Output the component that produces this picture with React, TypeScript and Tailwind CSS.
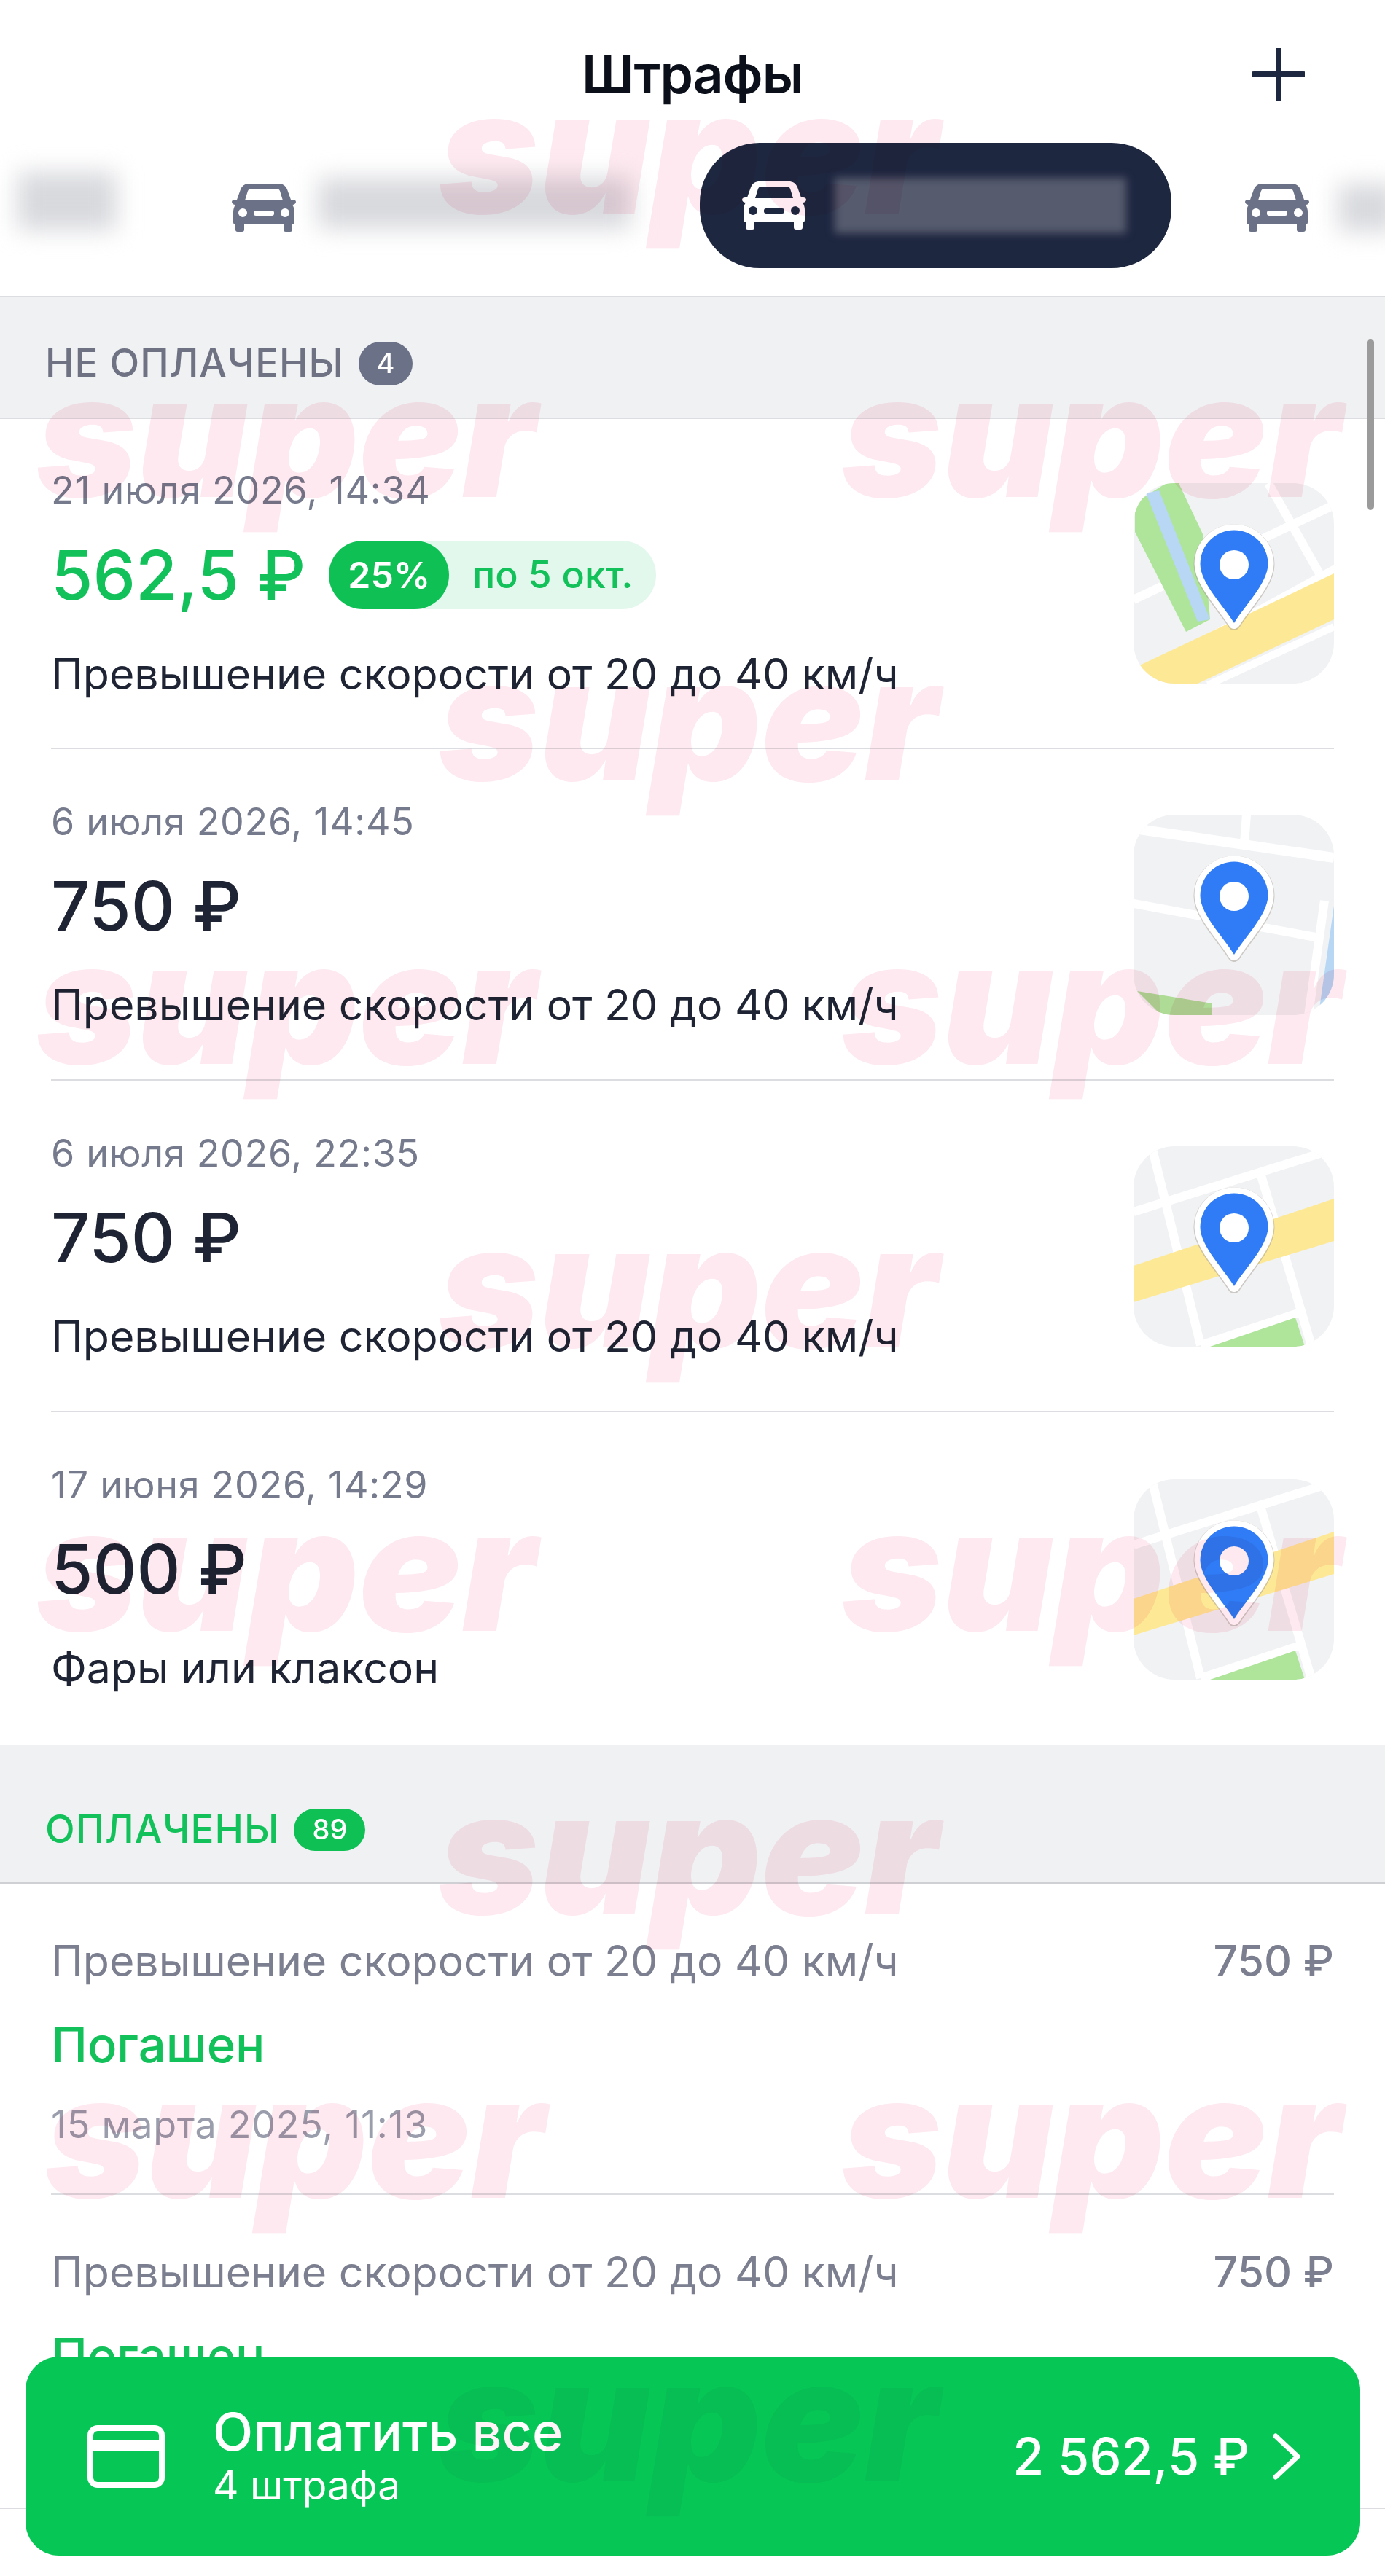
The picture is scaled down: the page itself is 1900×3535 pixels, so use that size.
const watermarks = [
  "left-[602px] top-[90px]",
  "left-[50px] top-[479px]",
  "left-[1155px] top-[479px]",
  "left-[602px] top-[868px]",
  "left-[50px] top-[1257px]",
  "left-[1155px] top-[1257px]",
  "left-[602px] top-[1646px]",
  "left-[50px] top-[2035px]",
  "left-[1155px] top-[2035px]",
  "left-[602px] top-[2424px]",
  "left-[62px] top-[2813px]",
  "left-[1155px] top-[2813px]",
  "left-[602px] top-[3202px] opacity-50",
];

function Car({ body, detail }: { body: string; detail: string }) {
  return (
    <svg width="88" height="66" viewBox="0 0 88 66">
      <path
        fill={body}
        d="M24 0h40c6 0 10 3 12 8l5 14h3c2 0 4 1 4 3s-2 4-5 4c2 3 3 6 3 10v14c0 2-1 3-3 3v7c0 2-1 3-3 3h-6c-2 0-3-1-3-3v-7H17v7c0 2-1 3-3 3H8c-2 0-3-1-3-3v-7c-2 0-3-1-3-3V39c0-4 1-7 3-10-3 0-5-2-5-4s2-3 4-3h3l5-14c2-5 6-8 12-8z"
      />
      <path fill={detail} d="M22 10c1-2 2-3 4-3h36c2 0 3 1 4 3l4 13H18z" />
      <circle cx="15" cy="40" r="6" fill={detail} />
      <circle cx="73" cy="40" r="6" fill={detail} />
      <rect x="30" y="37" width="28" height="7" rx="3" fill={detail} />
    </svg>
  );
}

function Blur({ className }: { className: string }) {
  return <div className={`bg-[#d8d9dd] blur-[16px] ${className}`} />;
}

const PIN =
  "M138 192C125 170 91.5 137 91.5 111A46.5 46.5 0 1 1 184.5 111C184.5 137 151 170 138 192Z";

function MapThumb({ variant, id }: { variant: 1 | 2 | 3; id: string }) {
  return (
    <svg width="275" height="275" viewBox="0 0 275 275" className="shrink-0">
      <clipPath id={id}>
        <rect width="275" height="275" rx="56" />
      </clipPath>
      <g clipPath={`url(#${id})`}>
        <rect width="275" height="275" fill="#f1f2f4" />
        {variant === 1 && (
          <>
            <path d="M0 160 275 30" stroke="#fff" strokeWidth="12" />
            <path d="M185 0 255 124" stroke="#fff" strokeWidth="12" />
            <path fill="#aee59a" d="M2 27 45 0h17l33 70 10 117-33 17L2 67z" />
            <path fill="#b7d7f5" d="M17 14 35 10l70 177-17 3z" />
            <path fill="#fff" d="M0 262 275 112v14L0 276z" />
            <path fill="#fde995" d="M0 254 275 124v63L88 275H10z" />
            <path d="M102 277 275 197" stroke="#fff" strokeWidth="10" />
          </>
        )}
        {variant === 2 && (
          <>
            <path d="M0 19 275 59" stroke="#fff" strokeWidth="14" />
            <path d="M155 0 152 39" stroke="#fff" strokeWidth="12" />
            <path d="M0 122 255 169" stroke="#fff" strokeWidth="12" />
            <path d="M262 118 240 275" stroke="#fff" strokeWidth="12" />
            <path fill="#b7d7f5" d="M275 125 255 266 252 275H275z" />
            <path fill="#aedc96" d="M5 242 108 259v16H38z" />
          </>
        )}
        {variant === 3 && (
          <>
            <path d="M25 0 92 273" stroke="#fff" strokeWidth="12" />
            <path d="M0 90 275 4" stroke="#fff" strokeWidth="12" />
            <path d="M175 40 245 277" stroke="#fff" strokeWidth="12" />
            <path d="M92 273 232 227" stroke="#fff" strokeWidth="12" />
            <path fill="#fde995" d="M0 164 275 72v58L0 214z" />
            <path fill="#aee59a" d="M105 275 222 235 235 275z" />
          </>
        )}
      </g>
      <path d={PIN} fill="#a89f94" stroke="#a89f94" strokeWidth="18" strokeLinejoin="round" opacity="0.5" transform="translate(0 1)" />
      <path d={PIN} fill="#fff" stroke="#fff" strokeWidth="16" strokeLinejoin="round" />
      <path d={PIN} fill="#2f7cf6" />
      <circle cx="138" cy="112" r="20" fill="#fff" />
    </svg>
  );
}

const unpaid = [
  { date: "6 июля 2026, 14:45", amount: "750 ₽", title: "Превышение скорости от 20 до 40 км/ч", map: 2 as const },
  { date: "6 июля 2026, 22:35", amount: "750 ₽", title: "Превышение скорости от 20 до 40 км/ч", map: 3 as const },
];

export default function App() {
  return (
    <div className="relative w-[1900px] h-[3535px] overflow-hidden bg-white [font-family:Inter,sans-serif] text-[#1e2433]">
      {/* Title */}
      <div className="relative flex h-[196px] items-start justify-center pt-[62px]">
        <h1 className="text-[73px] leading-[80px] font-semibold text-[#0b0f1a] tracking-[-1px]">Штрафы</h1>
        <svg className="absolute right-[110px] top-[66px]" width="72" height="72" viewBox="0 0 72 72">
          <path d="M36 2v68M2 36h68" stroke="#1e2740" strokeWidth="8" strokeLinecap="round" />
        </svg>
      </div>

      {/* Car tabs */}
      <div className="flex h-[210px] items-start overflow-hidden">
        <Blur className="ml-[24px] mt-[40px] h-[80px] w-[136px] shrink-0" />
        <div className="ml-[158px] mt-[56px] shrink-0">
          <Car body="#6b7186" detail="#ffffff" />
        </div>
        <Blur className="ml-[30px] mt-[48px] h-[70px] w-[430px] shrink-0" />
        <div className="ml-[94px] flex h-[172px] w-[647px] shrink-0 items-center rounded-[82px] bg-[#1e2740] pl-[58px]">
          <Car body="#ffffff" detail="#1e2740" />
          <div className="ml-[39px] h-[76px] w-[400px] bg-[#565b6e] blur-[6px]" />
        </div>
        <div className="ml-[101px] mt-[56px] shrink-0">
          <Car body="#6b7186" detail="#ffffff" />
        </div>
        <Blur className="ml-[40px] mt-[56px] h-[66px] w-[80px] shrink-0" />
      </div>

      {/* Unpaid */}
      <div className="flex h-[169px] items-center gap-[20px] border-y-2 border-y-[#dcdde0] bg-[#f0f1f3] pl-[62px] pt-[16px]">
        <span className="text-[53px] font-medium tracking-[1px] text-[#6e7283]">НЕ ОПЛАЧЕНЫ</span>
        <span className="flex h-[60px] w-[74px] items-center justify-center rounded-full bg-[#6b7186] text-[38px] font-medium text-white">4</span>
      </div>

      <div className="px-[70px]">
        <div className="flex h-[453px] justify-between border-b-2 border-b-[#dcdde0]">
          <div>
            <div className="mt-[68px] text-[52px] leading-[60px] tracking-[0.7px] text-[#757a8c]">21 июля 2026, 14:34</div>
            <div className="mt-[31px] flex items-center gap-[32px]">
              <span className="text-[93px] leading-[110px] font-medium text-[#13c15a]">562,5 ₽</span>
              <div className="flex h-[94px] items-center rounded-full bg-[#e3f8ed]">
                <span className="flex h-[94px] w-[165px] items-center justify-center rounded-full bg-[#0fc155] text-[50px] font-semibold text-white">25%</span>
                <span className="pl-[32px] pr-[32px] text-[52px] font-medium text-[#13c15a]">по 5 окт.</span>
              </div>
            </div>
            <div className="mt-[46px] text-[59px] leading-[70px]">Превышение скорости от 20 до 40 км/ч</div>
          </div>
          <div className="pt-[88px]">
            <MapThumb variant={1} id="map-a" />
          </div>
        </div>

        {unpaid.map((fine, i) => (
          <div key={i} className="flex h-[455px] justify-between border-b-2 border-b-[#dcdde0]">
            <div>
              <div className="mt-[70px] text-[52px] leading-[60px] tracking-[0.7px] text-[#757a8c]">{fine.date}</div>
              <div className="mt-[30px] text-[93px] leading-[110px] font-medium">{fine.amount}</div>
              <div className="mt-[46px] text-[59px] leading-[70px]">{fine.title}</div>
            </div>
            <div className="pt-[90px]">
              <MapThumb variant={fine.map} id={`map-b${i}`} />
            </div>
          </div>
        ))}

        <div className="flex h-[456px] justify-between">
          <div>
            <div className="mt-[70px] text-[52px] leading-[60px] tracking-[0.7px] text-[#757a8c]">17 июня 2026, 14:29</div>
            <div className="mt-[30px] text-[93px] leading-[110px] font-medium">500 ₽</div>
            <div className="mt-[46px] text-[59px] leading-[70px]">Фары или клаксон</div>
          </div>
          <div className="pt-[92px]">
            <MapThumb variant={3} id="map-c" />
          </div>
        </div>
      </div>

      {/* Paid */}
      <div className="flex h-[191px] items-center gap-[20px] border-b-2 border-b-[#cfd0d4] bg-[#f0f1f3] pl-[62px] pt-[44px]">
        <span className="text-[53px] font-medium tracking-[1px] text-[#13c15a]">ОПЛАЧЕНЫ</span>
        <span className="flex h-[58px] w-[98px] items-center justify-center rounded-full bg-[#0fc155] text-[38px] font-medium text-white">89</span>
      </div>

      <div className="px-[70px]">
        {[0, 1].map((i) => (
          <div key={i} className={`${i === 0 ? "h-[427px] border-b-2 border-b-[#dcdde0]" : "h-[429px]"}`}>
            <div className="flex justify-between pt-[74px] text-[59px] leading-[64px] text-[#7b7f8f]">
              <span>Превышение скорости от 20 до 40 км/ч</span>
              <span className="font-medium">750 ₽</span>
            </div>
            <div className="mt-[48px] text-[67px] leading-[70px] font-medium text-[#13c15a]">Погашен</div>
            <div className="mt-[45px] text-[52px] leading-[60px] tracking-[0.7px] text-[#9a9dab]">15 марта 2025, 11:13</div>
          </div>
        ))}
      </div>
      <div className="h-[2px] bg-[#dcdde0]" />

      {/* Floating pay button */}
      <div className="absolute left-[35px] top-[3234px] flex h-[273px] w-[1831px] items-center rounded-[46px] bg-[#06c755] text-white">
        <svg className="ml-[85px] shrink-0" width="106" height="86" viewBox="0 0 106 86" fill="none">
          <rect x="4" y="4" width="98" height="78" rx="10" stroke="#fff" strokeWidth="8" />
          <rect x="4" y="21" width="98" height="15" fill="#fff" />
        </svg>
        <div className="ml-[66px] flex flex-col">
          <span className="text-[72px] leading-[76px] font-medium">Оплатить все</span>
          <span className="mt-[2px] text-[55px] leading-[66px]">4 штрафа</span>
        </div>
        <span className="ml-auto text-[70px] font-medium">2 562,5 ₽</span>
        <svg className="ml-[32px] mr-[82px] shrink-0" width="38" height="64" viewBox="0 0 38 64" fill="none">
          <path d="M4 4 34 32 4 60" stroke="#fff" strokeWidth="7" strokeLinecap="round" strokeLinejoin="round" />
        </svg>
      </div>

      {/* Scrollbar */}
      <div className="absolute left-[1875px] top-[465px] h-[235px] w-[10px] rounded-full bg-[#9b9b9b]" />

      {/* Watermark */}
      {watermarks.map((pos) => (
        <span
          key={pos}
          className={`pointer-events-none absolute ${pos} text-[235px] leading-none font-black italic text-[#fde9ef] mix-blend-multiply`}
        >
          super
        </span>
      ))}
    </div>
  );
}
